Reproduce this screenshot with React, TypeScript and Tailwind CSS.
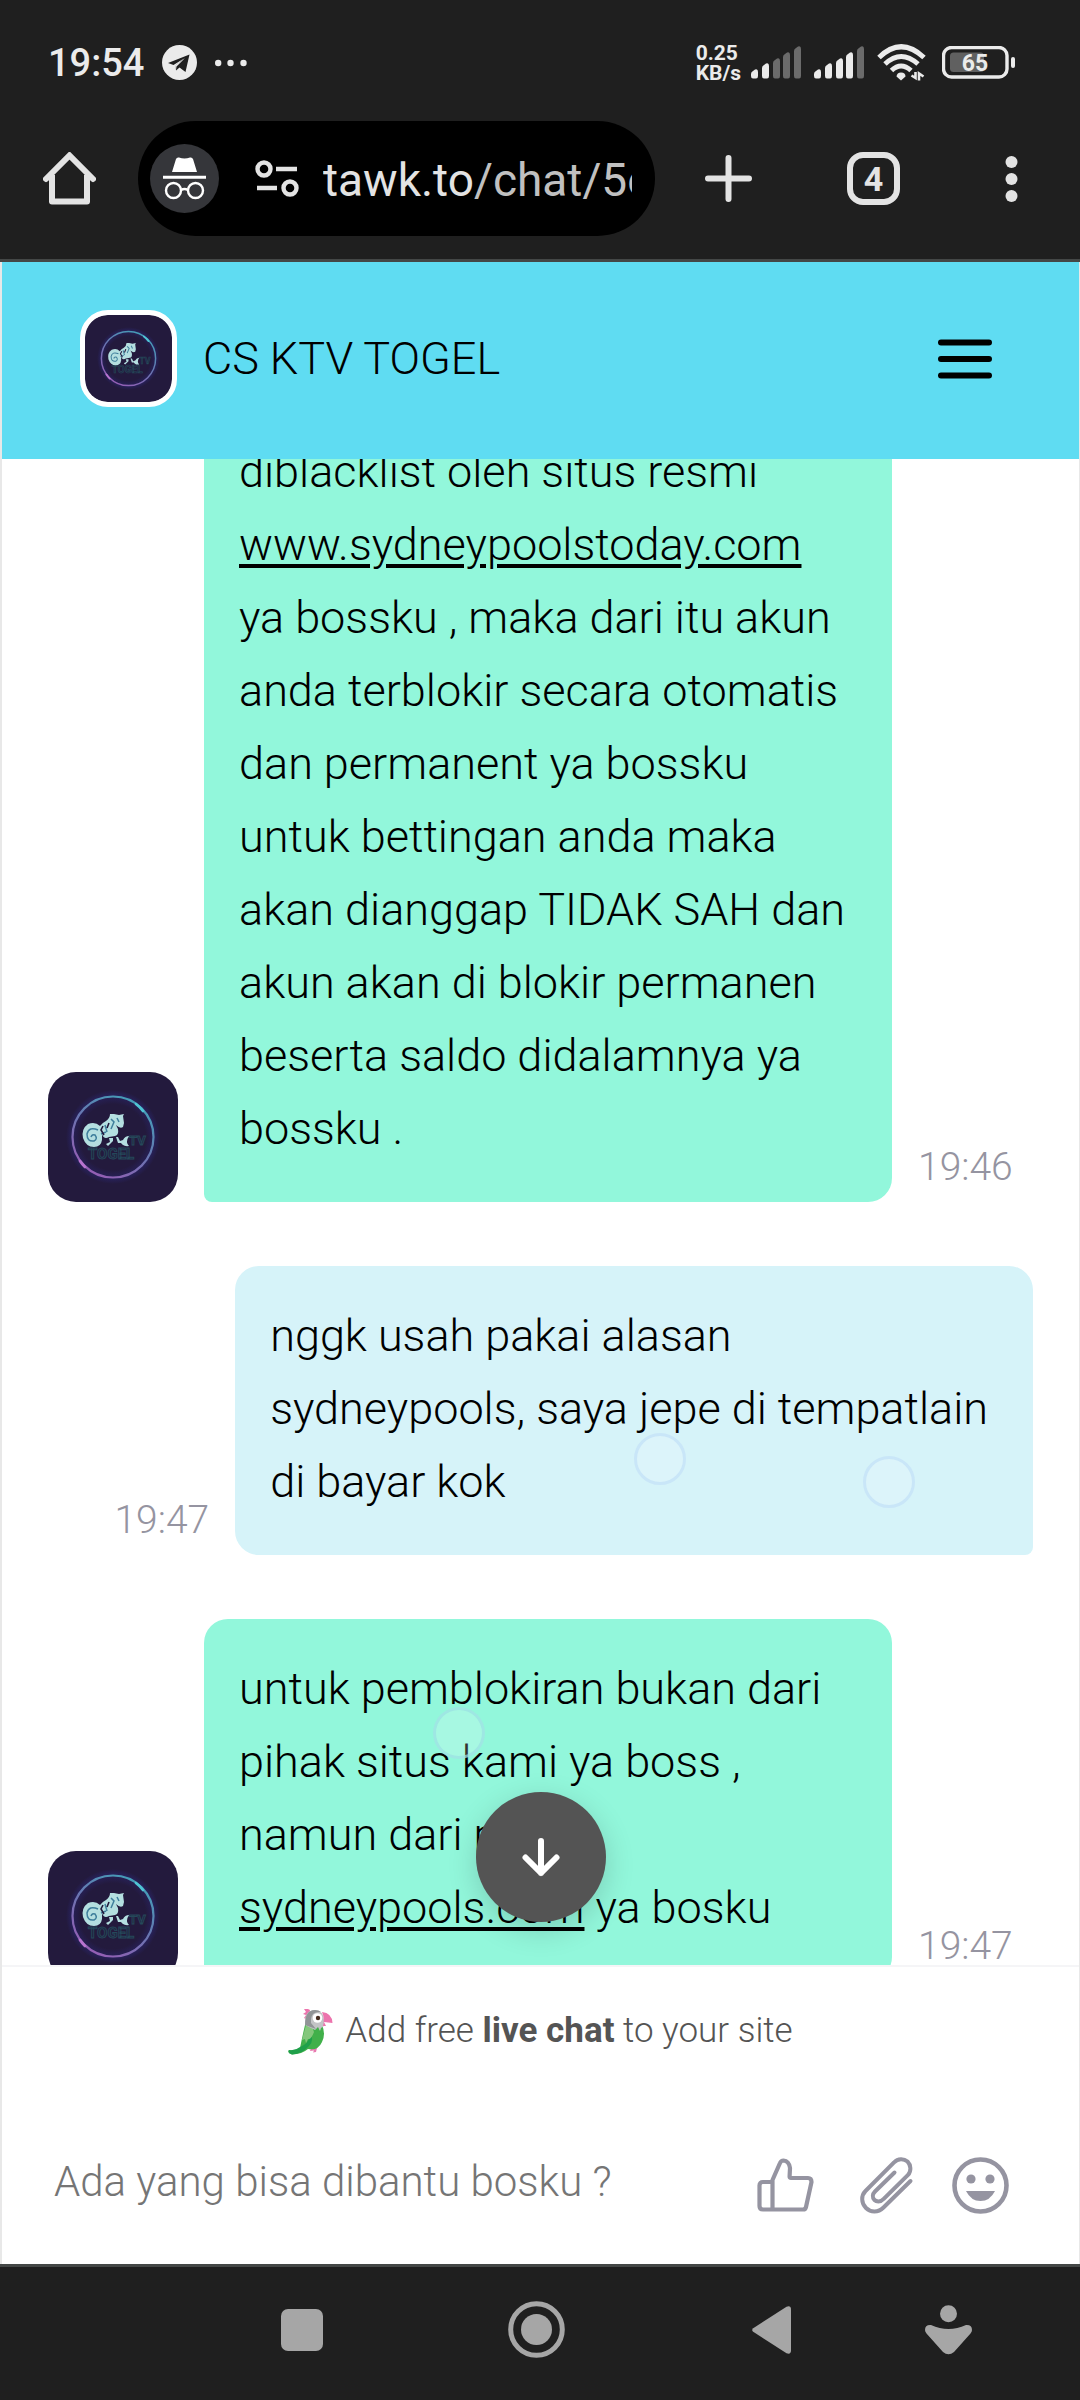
import type { ReactNode } from "react";

const SIGNAL_BARS = [
  { x: 0, top: 23 },
  { x: 11, top: 17 },
  { x: 22, top: 12 },
  { x: 32, top: 6 },
  { x: 43, top: 0 },
];

function SignalIcon({ level }: { level: number }) {
  return (
    <svg width="51" height="33" viewBox="0 0 51 33">
      {SIGNAL_BARS.map(({ x, top }, i) => (
        <path
          key={x}
          d={`M${x} ${top + 5} Q${x} ${top + 3} ${x + 2} ${top + 2} L${x + 4} ${top + 0.6} Q${x + 7} ${top - 0.6} ${x + 7} ${top + 3} V30 Q${x + 7} 32.5 ${x + 5} 32.5 H${x + 2} Q${x} 32.5 ${x} 30Z`}
          fill={i < level ? "#ebebeb" : "#6b6b6b"}
        />
      ))}
    </svg>
  );
}

function WifiIcon() {
  return (
    <svg width="49" height="37" viewBox="0 0 49 37" fill="none" stroke="#ebebeb" strokeWidth="5">
      <path d="M2 13.5 Q24 -8 47 13.5" />
      <path d="M8 20 Q24 5 41 20" />
      <path d="M14.5 26.5 Q24 17.5 34 26.5" />
      <path d="M24 36.5 L19.5 32.5 Q20 28.5 24 28.5 Q28.500 28.5 28.500 32.5Z" fill="#ebebeb" stroke="none" />
      <path d="M38.500 28 V34 L34.500 31.500 M42 36.500 V29.500 L46.500 32.500" strokeWidth="2.600" />
    </svg>
  );
}

function BatteryIcon() {
  return (
    <svg width="74" height="33" viewBox="0 0 74 33">
      <rect x="1.5" y="1.500" width="63.500" height="29.500" rx="8" fill="none" stroke="#ebebeb" strokeWidth="3.400" />
      <rect x="8" y="6.500" width="34" height="19.500" rx="3.500" fill="#606060" />
      <rect x="69" y="11" width="4" height="11" rx="2" fill="#ebebeb" />
      <text x="33" y="25" textAnchor="middle" fontFamily="Roboto" fontWeight="700" fontSize="23" fill="#ebebeb">
        65
      </text>
    </svg>
  );
}

function TelegramIcon() {
  return (
    <svg width="35" height="35" viewBox="0 0 35 35">
      <circle cx="17.5" cy="17.500" r="17.500" fill="#ebebeb" />
      <path d="M6 18 L27.500 9.500 L23.500 27 L17.500 22.500 L14 25.500 L13.500 20.500 L22 13.500 L11.500 20Z" fill="#1f1f1f" />
      <path d="M13 20.500 L23 13 L14.500 21.500 L14 25Z" fill="#ebebeb" />
    </svg>
  );
}

function StatusBar() {
  return (
    <div className="flex h-[121px] items-center justify-between pt-1 pr-16 pl-12 text-[#ebebeb]">
      <div className="flex items-center gap-[18px]">
        <span className="text-[38px] font-medium leading-none">19:54</span>
        <TelegramIcon />
        <svg width="32" height="8" viewBox="0 0 32 8" fill="#ebebeb">
          <circle cx="3.200" cy="4" r="3.200" />
          <circle cx="15.500" cy="4" r="3.200" />
          <circle cx="28.500" cy="4" r="3.200" />
        </svg>
      </div>
      <div className="flex items-center">
        <div className="mr-[10px] text-[21px] leading-5 font-bold">
          <div>0.25</div>
          <div>KB/s</div>
        </div>
        <div className="mr-3 flex gap-3">
          <SignalIcon level={2} />
          <SignalIcon level={4} />
        </div>
        <div className="mr-4">
          <WifiIcon />
        </div>
        <BatteryIcon />
      </div>
    </div>
  );
}

function IncognitoIcon() {
  return (
    <svg width="69" height="69" viewBox="0 0 69 69" className="shrink-0">
      <circle cx="34.500" cy="34.500" r="34.500" fill="#35363a" />
      <path d="M22 28 L26 15 Q27 13 29 13.600 Q34.500 15.500 40 13.600 Q42 13 43 15 L47 28Z" fill="#fff" />
      <path d="M13 33.200 H56" stroke="#fff" strokeWidth="3" />
      <g fill="none" stroke="#fff" strokeWidth="2.400">
        <circle cx="23.500" cy="46.500" r="7.500" />
        <circle cx="45.500" cy="46.500" r="7.500" />
        <path d="M31 46 Q34.500 44 38 46" />
      </g>
    </svg>
  );
}

function BrowserToolbar() {
  return (
    <div className="mb-[23px] flex h-[115px] items-center pr-[62px] pl-[43px] text-[#e3e3e3]">
      <button type="button" aria-label="Home">
        <svg width="53" height="53" viewBox="0 0 53 53" fill="none" stroke="currentColor" strokeWidth="6" strokeLinejoin="round">
          <path d="M9 23 V49.500 H44 V23" />
          <path d="M3 27 L26.500 3.500 L50 27" strokeLinecap="round" strokeLinejoin="miter" />
        </svg>
      </button>
      <div className="ml-[42px] flex h-full min-w-0 flex-1 items-center rounded-full bg-black pr-[23px] pl-3">
        <IncognitoIcon />
        <svg className="mr-6 ml-9 shrink-0" width="44" height="38" viewBox="0 0 44 38" fill="none" stroke="currentColor" strokeWidth="4.400">
          <circle cx="9" cy="9" r="6.500" />
          <path d="M21 9 H42 M2 28 H22" />
          <circle cx="35" cy="28" r="6.500" />
        </svg>
        <button type="button" className="min-w-0 flex-1 overflow-hidden pt-1 text-left text-[46px] whitespace-nowrap">
          tawk.to<span className="text-[#c0c0c0]">/chat/5e</span>
        </button>
      </div>
      <button type="button" aria-label="New tab" className="ml-[50px]">
        <svg width="47" height="47" viewBox="0 0 47 47" stroke="currentColor" strokeWidth="6" strokeLinecap="round">
          <path d="M23.500 3 V44 M3 23.500 H44" />
        </svg>
      </button>
      <button
        type="button"
        aria-label="Tabs"
        className="ml-[95px] flex size-[53px] items-center justify-center rounded-2xl border-6 border-[#e3e3e3] text-[34px] leading-none font-bold"
      >
        4
      </button>
      <button type="button" aria-label="Menu" className="ml-[105px]">
        <svg width="13" height="48" viewBox="0 0 13 48" fill="currentColor">
          <circle cx="6.500" cy="7" r="6" />
          <circle cx="6.500" cy="24" r="6" />
          <circle cx="6.500" cy="41" r="6" />
        </svg>
      </button>
    </div>
  );
}

// Site logo: white horse inside a neon ring
function Logo() {
  return (
    <svg viewBox="0 0 130 130" className="size-full">
      <defs>
        <linearGradient id="ring" x1="0.8" y1="0" x2="0.2" y2="1">
          <stop offset="0" stopColor="#3fa3b8" />
          <stop offset="0.5" stopColor="#6a74b0" />
          <stop offset="1" stopColor="#9a5cb4" />
        </linearGradient>
        <radialGradient id="glow">
          <stop offset="0.7" stopColor="#231a3d" />
          <stop offset="0.88" stopColor="#27215a" />
          <stop offset="1" stopColor="#231a3d" />
        </radialGradient>
      </defs>
      <rect width="130" height="130" fill="#231a3d" />
      <circle cx="65" cy="65" r="47" fill="url(#glow)" />
      <circle cx="65" cy="65" r="40.500" fill="none" stroke="url(#ring)" strokeWidth="2.200" />
      <path d="M88 32 Q92 35 95 39" stroke="#4fc4d4" strokeWidth="2.800" strokeLinecap="round" fill="none" />
      <path d="M32 89 Q34 92 37 95" stroke="#b873cf" strokeWidth="2.800" strokeLinecap="round" fill="none" />
      <g fontFamily="Roboto" fontWeight="700" fill="#20233f" stroke="#25485a" strokeWidth="0.900">
        <text x="81" y="73" fontSize="13">
          TV
        </text>
        <text x="40" y="87" fontSize="15">
          TOGEL
        </text>
      </g>
      <g fill="#b4dfe0">
        <path d="M52 54 Q47 49 40 52 Q33 57 35 66 Q38 75 46 75 Q53 75 54 68 L54 62 Q56 68 61 65 L67 64 Q71 63 70 57 L68 53 Q72 57 75 55 L76 51 L75 44 L76 42 L71 43 L66 42 L62 42 Q62 46 58 49 Q54 51 52 54Z" />
        <path d="M61 66 L65 66 L65 69 L60 74 L58 72 L62 70Z M68 65 L70 65 L73 71 L70 71Z M81 64 Q77 64 75 68 L72 69 Q74 75 81 74 Q77 70 81 64Z" />
      </g>
      <g fill="none" stroke="#3f7f9c" strokeWidth="1.500">
        <path d="M50 58 Q41 54 39 62 Q39 70 46 69 Q50 67 47 63 Q44 62 43 65" />
        <path d="M57 53 L59 60 M63 47 L66 50 L63 57 M69 46 L71 50 M53 62 L58 60" />
      </g>
      <path d="M55 54 L53 58 L56 63 M61 51 L59 56" stroke="#231a3d" strokeWidth="1.600" fill="none" />
    </svg>
  );
}

function ChatHeader() {
  return (
    <header className="relative z-10 flex h-[197px] shrink-0 items-center bg-[#5fdcf2] pr-[84px] pb-1 pl-[78px]">
      <div className="size-[97px] overflow-hidden rounded-[28px] border-5 border-white bg-white">
        <div className="size-full overflow-hidden rounded-[22px]">
          <Logo />
        </div>
      </div>
      <h1 className="ml-[26px] flex-1 text-[45px] font-light">CS KTV TOGEL</h1>
      <button type="button" aria-label="Menu">
        <svg width="60" height="40" viewBox="0 0 60 40" stroke="#000" strokeWidth="6" strokeLinecap="round">
          <path d="M6 3.500 H54 M6 20 H54 M6 36.500 H54" />
        </svg>
      </button>
    </header>
  );
}

function Time({ children }: { children: ReactNode }) {
  return <time className="block pb-3 text-[39px] leading-[46px] text-[#9594a1]">{children}</time>;
}

function AgentMessage({ time, children }: { time: string; children: ReactNode }) {
  return (
    <div className="flex items-end gap-[26px]">
      <div className="size-[130px] shrink-0 overflow-hidden rounded-[28px]">
        <Logo />
      </div>
      <p className="flex-1 rounded-3xl rounded-bl-lg bg-[#92f7db] px-[35px] pt-[33px] pb-[37px]">{children}</p>
      <div className="w-[115px] shrink-0">
        <Time>{time}</Time>
      </div>
    </div>
  );
}

function VisitorMessage({ time, children }: { time: string; children: ReactNode }) {
  return (
    <div className="flex items-end justify-end gap-[26px]">
      <Time>{time}</Time>
      <p className="w-[81%] rounded-3xl rounded-br-lg bg-[#d6f3f9] px-[35px] pt-[33px] pb-[37px]">{children}</p>
    </div>
  );
}

function ChatLink({ children }: { children: string }) {
  return (
    <a href={`https://${children}`} className="underline decoration-4 underline-offset-4">
      {children}
    </a>
  );
}

function Conversation() {
  return (
    <main className="relative flex min-h-0 flex-1 flex-col justify-end overflow-hidden border-b-2 border-[#f5f5f7]">
      <div className="-mb-4 flex flex-col gap-16 pr-[46px] pl-[46px] text-[45px] leading-[73px] font-light">
        <AgentMessage time="19:46">
          diblacklist oleh situs resmi <ChatLink>www.sydneypoolstoday.com</ChatLink> ya bossku , maka dari itu akun
          anda terblokir secara otomatis dan permanent ya bossku untuk bettingan anda maka akan dianggap TIDAK SAH dan
          akun akan di blokir permanen beserta saldo didalamnya ya bossku .
        </AgentMessage>
        <VisitorMessage time="19:47">
          nggk usah pakai alasan
          <br />
          sydneypools, saya jepe di tempatlain
          <br />
          di bayar kok
        </VisitorMessage>
        <AgentMessage time="19:47">
          untuk pemblokiran bukan dari pihak situs kami ya boss , namun dari pihak <ChatLink>sydneypools.com</ChatLink>{" "}
          ya bosku
        </AgentMessage>
      </div>

      <span className="absolute bottom-[480px] left-[632px] size-[52px] rounded-full border-3 border-[#c9e6f8] bg-white/15" />
      <span className="absolute bottom-[457px] left-[861px] size-[52px] rounded-full border-3 border-[#c9e6f8] bg-white/15" />
      <span className="absolute bottom-[206px] left-[431px] size-[52px] rounded-full border-3 border-[#9adfe2]/70 bg-white/20" />

      <button
        type="button"
        aria-label="Scroll to bottom"
        className="absolute bottom-[43px] left-1/2 flex size-[130px] -translate-x-1/2 items-center justify-center rounded-full bg-[#545454] shadow-[0_8px_30px_rgba(0,0,0,0.16)]"
      >
        <svg width="38" height="40" viewBox="0 0 38 40" fill="none" stroke="#fff" strokeWidth="6" strokeLinecap="round" strokeLinejoin="round">
          <path d="M19 4 V36 M3.500 20.500 L19 36 L34.500 20.500" />
        </svg>
      </button>
    </main>
  );
}

function ParrotIcon() {
  return (
    <svg width="45" height="47" viewBox="0 0 45 47">
      <path d="M23 40 L22 43 L26 42.500 L25 44.500 L28 44 L29 40Z" fill="#e87bb0" />
      <path d="M17 17 Q14 30 12 40 Q7 43 1 42 Q-1 45 4 46.500 Q14 46 20 41 Q30 43 34 34 Q38 26 34 17Z" fill="#41b04a" />
      <path d="M12 39 Q20 36 23 27 Q26 33 21 38 Q14 46 4 46.500 Q-1 45 1 42 Q7 43 12 39Z" fill="#1fa04a" />
      <path d="M18 17 Q25 18 26 24 Q23 32 20 31 L18 35 L17 31 L14 32Z" fill="#84c77c" />
      <path d="M20 1 L22 2 L20 12 L16 10 L18 7 L15 6 L18 4 L16 1Z" fill="#ec74ad" />
      <path d="M17 17 Q16 2 27 2 Q36 3 36 12 V18 L33 20 L32 23 L30 19 L27 22Z" fill="#c3c4c6" />
      <path d="M17 17 Q17 2 27 2 Q31 2 33 4 Q22 3 23 15 L28 21Z" fill="#909496" />
      <path d="M34 4 Q44 5 44.500 15 L36 14 L38 18 L35 18 Q37 11 34 4Z" fill="#ec74ad" />
      <circle cx="29.500" cy="10" r="4.800" fill="#fff" />
      <circle cx="30" cy="10" r="2.200" fill="#462c20" />
    </svg>
  );
}

function ChatFooter() {
  return (
    <footer className="shrink-0 bg-white">
      <a href="https://www.tawk.to" className="flex h-[128px] items-center justify-center gap-3 text-[35px] font-light text-[#545454]">
        <ParrotIcon />
        <span>
          Add free <b className="font-bold">live chat</b> to your site
        </span>
      </a>
      <form className="flex h-[169px] items-center pt-1 pr-[70px] pl-[52px] text-[#9594a1]">
        <input
          type="text"
          aria-label="Message"
          placeholder="Ada yang bisa dibantu bosku ?"
          className="min-w-0 flex-1 text-[42px] font-light text-black outline-none placeholder:text-[#757575]"
        />
        <div className="flex items-center pt-2">
          <button type="button" aria-label="Rate this chat">
            <svg width="57" height="55" viewBox="0 0 57 55" fill="none" stroke="currentColor" strokeWidth="4.200" strokeLinejoin="round">
              <path d="M15.500 24 H6 Q2.500 24 2.500 27.500 V48 Q2.500 51.500 6 51.500 H46 Q48.500 51.500 49 49 L54.500 24 Q54.500 20 51 20 H34 Q32.500 20 32.600 18.500 L33 10 Q32 3 26.500 2.500 Q24 2.500 23 5 L15.500 22 V51.500" />
            </svg>
          </button>
          <button type="button" aria-label="Attach a file" className="ml-[46px]">
            <svg width="54" height="57" viewBox="0 0 54 57" fill="none" stroke="currentColor" strokeWidth="4" strokeLinecap="round">
              <path d="M50.500 24 L23.500 50.500 C18 56 10.500 55.500 6 51 C1 46 1 38.500 5.500 34 L34 5.500 C38 1 44 1.500 47.500 4.500 C51 8 51.500 14 48 18 L23.500 42 C20.500 45.500 16 44.500 14.500 43 C12 40.500 12.500 37 15 34.500 L34.500 15.500" />
            </svg>
          </button>
          <button type="button" aria-label="Emoji" className="ml-[38px]">
            <svg width="57" height="57" viewBox="0 0 57 57" fill="currentColor">
              <circle cx="28.500" cy="28.500" r="26" fill="none" stroke="currentColor" strokeWidth="4.600" />
              <circle cx="19" cy="22" r="4.600" />
              <circle cx="38" cy="22" r="4.600" />
              <path d="M14 34 H43 Q38 44 28.500 44 Q19 44 14 34Z" />
            </svg>
          </button>
        </div>
      </form>
    </footer>
  );
}

function AndroidNav() {
  return (
    <nav className="grid h-[136px] shrink-0 grid-cols-[184fr_235fr_235fr_235fr_118fr_73fr] items-center border-t-3 border-[#444746] bg-[#1f1f1f] pb-2 text-[#a6a6a6]">
      <span />
      <button type="button" aria-label="Recent apps" className="justify-self-center">
        <svg width="42" height="42" viewBox="0 0 42 42" fill="currentColor">
          <rect width="42" height="42" rx="7" />
        </svg>
      </button>
      <button type="button" aria-label="Home" className="justify-self-center">
        <svg width="57" height="57" viewBox="0 0 57 57" fill="currentColor">
          <circle cx="28.500" cy="28.500" r="25.800" fill="none" stroke="currentColor" strokeWidth="5" />
          <circle cx="28.500" cy="28.500" r="15.500" />
        </svg>
      </button>
      <button type="button" aria-label="Back" className="justify-self-center">
        <svg width="39" height="48" viewBox="0 0 39 48" fill="currentColor">
          <path d="M1.200 22.200 L34.500 0.800 Q39 -0.800 39 3.500 V44.500 Q39 48.800 34.500 47.200 L1.200 25.800 Q-0.800 24 1.200 22.200Z" />
        </svg>
      </button>
      <button type="button" aria-label="Accessibility" className="justify-self-center">
        <svg width="47" height="50" viewBox="0 0 47 50" fill="currentColor">
          <circle cx="23.500" cy="8.700" r="8.500" />
          <path d="M6 20 Q23.500 28 41 20 Q47 19.500 47 25 Q47 26.500 45.500 28.500 L29 47 Q23.500 51.500 18 47 L1.500 28.500 Q0 26.500 0 25 Q0 19.500 6 20Z" />
        </svg>
      </button>
    </nav>
  );
}

export default function App() {
  return (
    <div className="flex h-screen flex-col overflow-hidden bg-[#1f1f1f] font-[Roboto,sans-serif]">
      <div className="shrink-0 border-b-3 border-[#444746]">
        <StatusBar />
        <BrowserToolbar />
      </div>
      <div className="flex min-h-0 flex-1 flex-col border-r-1 border-l-2 border-[#e8e8e8] bg-white">
        <ChatHeader />
        <Conversation />
        <ChatFooter />
      </div>
      <AndroidNav />
    </div>
  );
}
